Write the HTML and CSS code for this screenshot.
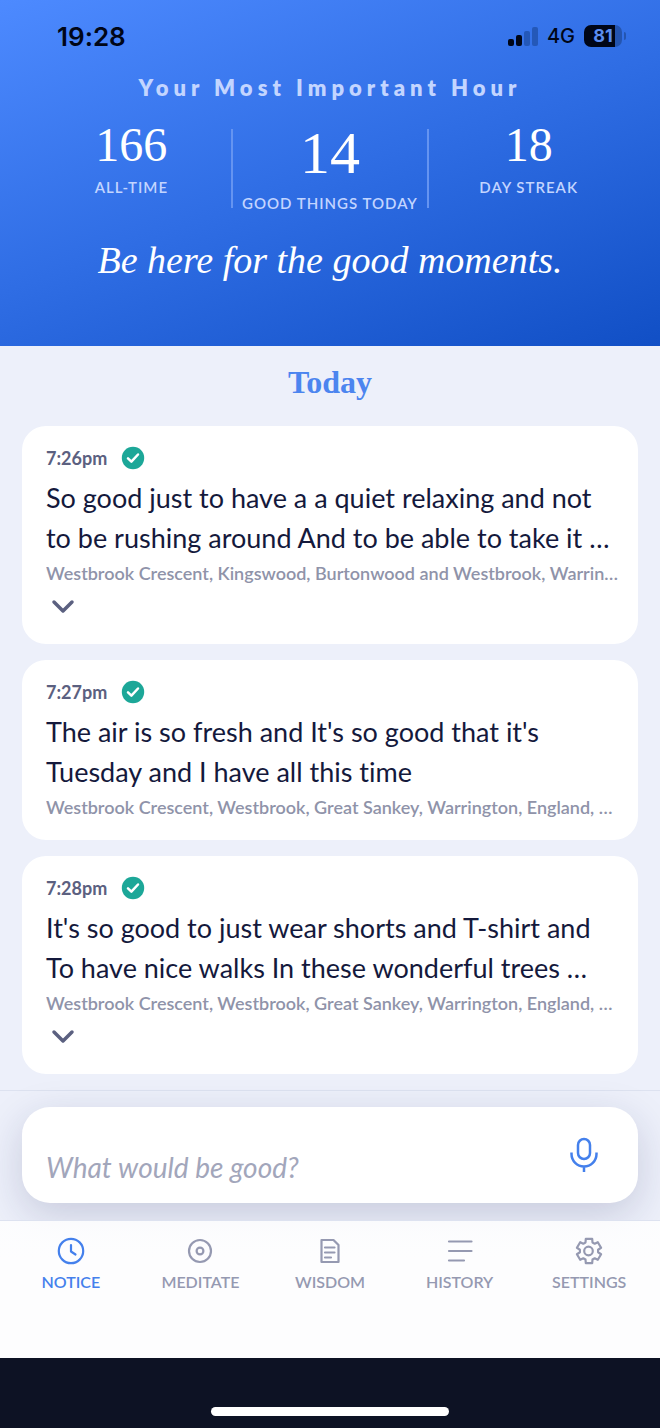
FILE: index.html
```html
<!DOCTYPE html>
<html lang="en">
<head>
  <meta charset="UTF-8" />
  <meta name="viewport" content="width=device-width, initial-scale=1" />
  <title>Your Most Important Hour</title>
  <link rel="stylesheet" href="styles.css">
</head>
<body>

  <header>
    <div class="status-bar">
      <span class="clock">19:28</span>
      <div class="status-right">
        <svg class="signal" viewBox="0 0 30 20" aria-hidden="true">
          <rect x="0" y="13" width="6" height="7" rx="2" />
          <rect x="8" y="9" width="6" height="11" rx="2" />
          <rect class="dim" x="16" y="5" width="6" height="15" rx="2" />
          <rect class="dim" x="24" y="1" width="6" height="19" rx="2" />
        </svg>
        <span class="network">4G</span>
        <div class="battery"><span>81</span></div>
      </div>
    </div>

    <h1>Your Most Important Hour</h1>

    <div class="stats">
      <div class="stat">
        <div class="stat-number">166</div>
        <div class="stat-label">ALL-TIME</div>
      </div>
      <div class="stat stat-main">
        <div class="stat-number">14</div>
        <div class="stat-label">GOOD THINGS TODAY</div>
      </div>
      <div class="stat">
        <div class="stat-number">18</div>
        <div class="stat-label">DAY STREAK</div>
      </div>
    </div>

    <p class="tagline">Be here for the good moments.</p>
  </header>

  <main>
    <h2>Today</h2>

    <article class="card">
      <div class="card-top">
        <time>7:26pm</time>
        <svg class="check" viewBox="0 0 24 24" aria-hidden="true"><circle cx="12" cy="12" r="11.2" /><path d="M7 12.3l3.4 3.3L17 8.5" /></svg>
      </div>
      <p class="card-text">So good just to have a a quiet relaxing and not to be rushing around And to be able to take it …</p>
      <p class="location">Westbrook Crescent, Kingswood, Burtonwood and Westbrook, Warrin…</p>
      <button class="expand" aria-label="Show more">
        <svg viewBox="0 0 24 16" aria-hidden="true"><path d="M3 3l9 9 9-9" /></svg>
      </button>
    </article>

    <article class="card">
      <div class="card-top">
        <time>7:27pm</time>
        <svg class="check" viewBox="0 0 24 24" aria-hidden="true"><circle cx="12" cy="12" r="11.2" /><path d="M7 12.3l3.4 3.3L17 8.5" /></svg>
      </div>
      <p class="card-text">The air is so fresh and It's so good that it's Tuesday and I have all this time</p>
      <p class="location">Westbrook Crescent, Westbrook, Great Sankey, Warrington, England, …</p>
    </article>

    <article class="card">
      <div class="card-top">
        <time>7:28pm</time>
        <svg class="check" viewBox="0 0 24 24" aria-hidden="true"><circle cx="12" cy="12" r="11.2" /><path d="M7 12.3l3.4 3.3L17 8.5" /></svg>
      </div>
      <p class="card-text">It's so good to just wear shorts and T-shirt and To have nice walks In these wonderful trees …</p>
      <p class="location">Westbrook Crescent, Westbrook, Great Sankey, Warrington, England, …</p>
      <button class="expand" aria-label="Show more">
        <svg viewBox="0 0 24 16" aria-hidden="true"><path d="M3 3l9 9 9-9" /></svg>
      </button>
    </article>
  </main>

  <form class="composer">
    <div class="composer-box">
      <input type="text" placeholder="What would be good?" aria-label="What would be good?" />
      <button type="button" class="mic" aria-label="Record">
        <svg viewBox="0 0 28 36" aria-hidden="true">
          <rect x="8" y="2" width="12" height="20" rx="6" />
          <path d="M1.5 15.5v1.5a12.5 12.5 0 0 0 25 0v-1.5M14 29.5V35" />
        </svg>
      </button>
    </div>
  </form>

  <nav>
    <a href="#notice" class="active">
      <svg viewBox="0 0 28 28" aria-hidden="true"><circle cx="14" cy="14" r="12.2" /><path d="M14 8v6.5l4.5 3" /></svg>
      NOTICE
    </a>
    <a href="#meditate">
      <svg viewBox="0 0 28 28" aria-hidden="true"><circle cx="14" cy="14" r="11" /><circle cx="14" cy="14" r="3.4" /></svg>
      MEDITATE
    </a>
    <a href="#wisdom">
      <svg viewBox="0 0 28 28" aria-hidden="true"><path d="M5.5 3h12L22.5 8v17h-17zM9 10.5h9.5M9 15.5h9.5M9 20.5h6" /></svg>
      WISDOM
    </a>
    <a href="#history">
      <svg viewBox="0 0 28 28" aria-hidden="true"><path d="M3 4.5h22.5M3 14h22.5M3 23.5h15" /></svg>
      HISTORY
    </a>
    <a href="#settings">
      <svg viewBox="0 0 28 28" aria-hidden="true"><path d="M10.8 1.9h6.4l.3 3.6 2.2 1.2 3.1-1.5 3.3 5.6-3 1.9v2.6l3 1.9-3.3 5.6-3.1-1.5-2.2 1.2-.3 3.6h-6.4l-.3-3.6-2.2-1.2-3.1 1.5-3.3-5.6 3-1.9v-2.6l-3-1.9 3.3-5.6 3.1 1.5 2.2-1.2z" /><circle cx="13.5" cy="14" r="4.3" /></svg>
      SETTINGS
    </a>
  </nav>

  <footer>
    <div class="home-bar"></div>
  </footer>

</body>
</html>
```

FILE: styles.css
```css
* {
  box-sizing: border-box;
}

body {
  margin: 0;
  min-height: 100vh;
  display: flex;
  flex-direction: column;
  font-family: Lato, sans-serif;
  font-variant-ligatures: none;
  background: #edf0fa;
  color: #14193c;
}

h1, h2, p {
  margin: 0;
}

button {
  padding: 0;
  border: none;
  background: none;
  cursor: pointer;
}

svg {
  display: block;
  fill: none;
  stroke: currentColor;
  stroke-linecap: round;
  stroke-linejoin: round;
}

header {
  padding-bottom: 62px;
  background: linear-gradient(160deg, #4d8aff 0%, #2f6de4 50%, #114fc5 100%);
  color: white;
  text-align: center;
}

.status-bar {
  display: flex;
  justify-content: space-between;
  align-items: center;
  height: 72px;
  padding: 0 38px 0 57px;
  color: #000617;
  font-family: Inter, sans-serif;
}

.clock {
  font-size: 26px;
  font-weight: 600;
}

.status-right {
  display: flex;
  align-items: center;
  gap: 9px;
}

.signal {
  width: 30px;
  height: 20px;
  fill: #000617;
  stroke: none;
}

.signal .dim {
  fill: #2458b8;
}

.network {
  font-size: 20px;
  font-weight: 500;
}

.battery {
  position: relative;
  width: 38px;
  height: 22px;
  border-radius: 7px;
  background: linear-gradient(to right, #000617 81%, #2455b0 81%);
  color: #5b8df0;
  font-size: 18px;
  font-weight: 700;
  line-height: 22px;
  text-align: center;
}

.battery::after {
  content: "";
  position: absolute;
  top: 7px;
  right: -4px;
  width: 2px;
  height: 8px;
  border-radius: 0 2px 2px 0;
  background: #2455b0;
}

h1 {
  font-size: 22px;
  font-weight: 800;
  line-height: 32px;
  letter-spacing: 5px;
  color: #c3d5ff;
}

.stats {
  display: grid;
  grid-template-columns: repeat(3, 1fr);
  margin: 25px 32px 0;
}

.stat-main {
  border-left: 2px solid #6594f1;
  border-right: 2px solid #6594f1;
}

.stat-number {
  font-family: "Liberation Serif", serif;
  font-size: 48px;
  line-height: 32px;
  margin-bottom: 21px;
}

.stat-main .stat-number {
  font-size: 60px;
  line-height: 48px;
}

.stat-label {
  font-size: 15px;
  font-weight: 600;
  line-height: 10px;
  letter-spacing: 1px;
  white-space: nowrap;
  color: #c3d5ff;
}

.tagline {
  padding-top: 28px;
  font-family: "Liberation Serif", serif;
  font-size: 38px;
  font-style: italic;
  line-height: 48px;
}

main {
  display: flex;
  flex-direction: column;
  gap: 16px;
  padding: 16px 22px;
}

h2 {
  margin-bottom: 8px;
  font-family: "Liberation Serif", serif;
  font-size: 32px;
  font-weight: 700;
  line-height: 40px;
  text-align: center;
  color: #4c85ef;
}

.card {
  padding: 20px 18px 18px 24px;
  border-radius: 24px;
  background: white;
}

.card-top {
  display: flex;
  align-items: center;
  gap: 14px;
  margin-bottom: 8px;
  font-size: 18px;
  font-weight: 700;
  line-height: 24px;
  color: #5b6080;
}

.check {
  width: 24px;
  height: 24px;
  stroke: white;
  stroke-width: 2.5;
}

.check circle {
  fill: #1ca798;
  stroke: none;
}

.card-text {
  font-size: 27px;
  line-height: 40px;
}

.location {
  overflow: hidden;
  font-size: 18px;
  font-weight: 600;
  line-height: 30px;
  white-space: nowrap;
  text-overflow: ellipsis;
  color: #8f93a9;
}

.expand {
  display: flex;
  align-items: center;
  height: 38px;
  padding-left: 5px;
  color: #5b6080;
}

.expand svg {
  width: 24px;
  height: 16px;
  stroke-width: 3.5;
}

.composer {
  padding: 16px 22px 17px;
  border-top: 1px solid #dde2f0;
}

.composer-box {
  display: flex;
  align-items: center;
  height: 96px;
  padding: 0 40px 0 24px;
  border-radius: 28px;
  background: white;
  box-shadow: 0 12px 40px rgba(30, 35, 90, 0.18);
}

.composer-box input {
  flex: 1;
  min-width: 0;
  padding: 24px 0 0;
  border: none;
  outline: none;
  background: none;
  font-family: Lato, sans-serif;
  font-size: 28px;
  line-height: 40px;
}

.composer-box input::placeholder {
  color: #a2a6bb;
  font-style: italic;
}

.mic {
  color: #4480ec;
}

.mic svg {
  width: 28px;
  height: 36px;
  stroke-width: 2.5;
  stroke-linecap: butt;
}

nav {
  display: grid;
  grid-template-columns: repeat(5, 1fr);
  flex: 1;
  padding: 16px 6px 0;
  border-top: 1px solid #dde2f0;
  background: linear-gradient(rgba(255, 255, 255, 0.85), #fdfdfe 40px);
}

nav a {
  display: flex;
  flex-direction: column;
  align-items: center;
  gap: 7px;
  height: 120px;
  font-size: 16px;
  font-weight: 600;
  line-height: 20px;
  text-decoration: none;
  color: #9599b1;
}

nav a.active {
  color: #4480ec;
}

nav svg {
  width: 28px;
  height: 28px;
  stroke-width: 2.2;
}

footer {
  display: flex;
  justify-content: center;
  align-items: flex-end;
  height: 70px;
  padding-bottom: 12px;
  background: #0d1224;
}

.home-bar {
  width: 36%;
  height: 9px;
  border-radius: 5px;
  background: white;
}
```
